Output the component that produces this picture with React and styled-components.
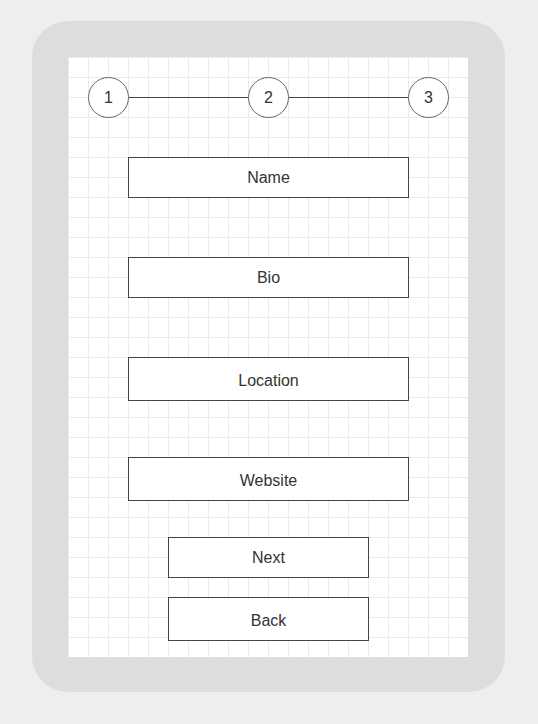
import React from "react";
import styled, { createGlobalStyle } from "styled-components";

const Global = createGlobalStyle`
  html, body { margin: 0; padding: 0; background: #eeeeee; }
  body { font-family: "Liberation Sans", Arial, sans-serif; }
  * { box-sizing: border-box; }
`;

const Page = styled.div`
  display: flex;
  justify-content: flex-start;
  padding: 21px 0 0 32px;
`;

const Device = styled.div`
  background: #dddddd;
  border-radius: 36px;
  padding: 36px 37px 35px 36px;
`;

const Screen = styled.div`
  width: 400px;
  height: 600px;
  background-color: #ffffff;
  background-image:
    linear-gradient(to right, #ebebeb 1px, transparent 1px),
    linear-gradient(to bottom, #ebebeb 1px, transparent 1px);
  background-size: 20px 20px;
  display: flex;
  flex-direction: column;
  align-items: flex-start;
  padding: 20px;
`;

const Stepper = styled.div`
  width: 361px;
  height: 41px;
  display: flex;
  align-items: center;
`;

const Step = styled.div`
  width: 41px;
  height: 41px;
  flex: none;
  border: 1px solid #666666;
  border-radius: 50%;
  background: #ffffff;
  display: flex;
  align-items: center;
  justify-content: center;
  font-size: 16px;
  color: #333333;
`;

const Connector = styled.div`
  flex: 1;
  height: 1px;
  background: #444444;
`;

const Box = styled.div`
  width: ${(p) => p.$width}px;
  height: ${(p) => p.$height}px;
  margin-top: ${(p) => p.$top}px;
  margin-left: ${(p) => p.$left}px;
  padding-top: ${(p) => (p.$height > 42 ? 3 : 0)}px;
  border: 1px solid #444444;
  background: #ffffff;
  display: flex;
  align-items: center;
  justify-content: center;
  font-size: 16px;
  color: #333333;
  flex: none;
`;

const items = [
  { label: "Name", width: 281, height: 41, top: 39, left: 40 },
  { label: "Bio", width: 281, height: 41, top: 59, left: 40 },
  { label: "Location", width: 281, height: 44, top: 59, left: 40 },
  { label: "Website", width: 281, height: 44, top: 56, left: 40 },
  { label: "Next", width: 201, height: 41, top: 36, left: 80 },
  { label: "Back", width: 201, height: 44, top: 19, left: 80 },
];

export default function App() {
  return (
    <>
      <Global />
      <Page>
        <Device>
          <Screen>
            <Stepper>
              <Step>1</Step>
              <Connector />
              <Step>2</Step>
              <Connector />
              <Step>3</Step>
            </Stepper>
            {items.map((it) => (
              <Box
                key={it.label}
                $width={it.width}
                $height={it.height}
                $top={it.top}
                $left={it.left}
              >
                {it.label}
              </Box>
            ))}
          </Screen>
        </Device>
      </Page>
    </>
  );
}
